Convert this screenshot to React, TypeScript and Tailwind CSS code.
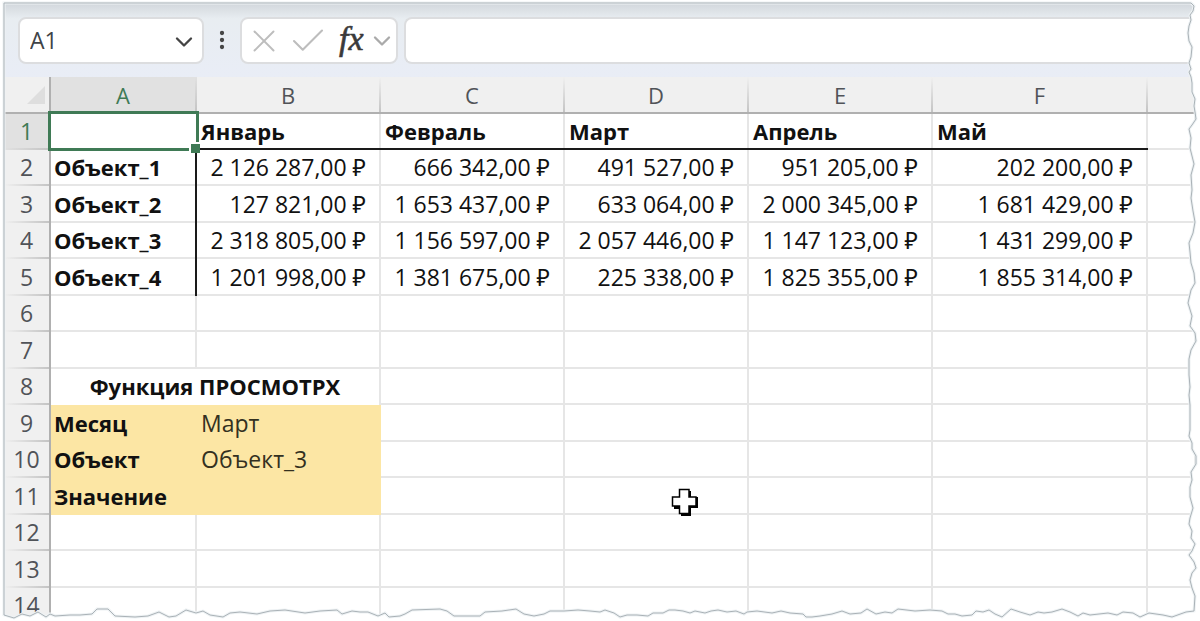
import { Check, ChevronDown, EllipsisVertical, X } from "lucide-react";
import clsx from "clsx";

const columns = ["A", "B", "C", "D", "E", "F", ""];

const months = ["Январь", "Февраль", "Март", "Апрель", "Май"];

const objects = [
  { name: "Объект_1", values: ["2 126 287,00 ₽", "666 342,00 ₽", "491 527,00 ₽", "951 205,00 ₽", "202 200,00 ₽"] },
  { name: "Объект_2", values: ["127 821,00 ₽", "1 653 437,00 ₽", "633 064,00 ₽", "2 000 345,00 ₽", "1 681 429,00 ₽"] },
  { name: "Объект_3", values: ["2 318 805,00 ₽", "1 156 597,00 ₽", "2 057 446,00 ₽", "1 147 123,00 ₽", "1 431 299,00 ₽"] },
  { name: "Объект_4", values: ["1 201 998,00 ₽", "1 381 675,00 ₽", "225 338,00 ₽", "1 825 355,00 ₽", "1 855 314,00 ₽"] },
];

const lookup = [
  { label: "Месяц", value: "Март" },
  { label: "Объект", value: "Объект_3" },
  { label: "Значение", value: "" },
];

const grid = "border-r-2 border-b-2 border-[#e6e6e6]";

// Torn paper outline, clockwise from the top left corner
const tornEdge =
  "4,3 1191,3 1194,6 1193,11 1190,15 1191,20 1189,26 1188,33 1189,41 1192,47 1191,57 1189,63 1191,69 1189,72 1191,77 1192,83 1192,92 1195,99 1194,106 1195,112 1196,119 1192,125 1189,129 1191,138 1190,148 1192,156 1194,164 1191,175 1192,190 1191,198 1193,211 1195,222 1193,233 1189,243 1190,252 1191,263 1194,273 1195,283 1191,290 1188,303 1192,316 1190,326 1195,333 1196,341 1191,350 1189,359 1189,375 1190,387 1189,395 1190,405 1190,430 1189,436 1192,443 1192,449 1196,456 1196,464 1191,472 1192,480 1190,487 1190,497 1193,508 1190,518 1189,524 1192,531 1191,538 1195,544 1192,551 1189,555 1194,562 1196,568 1192,573 1190,580 1192,588 1195,596 1194,611 " +
  "1186,612 1172,617 1163,615 1149,613 1140,617 1133,613 1123,612 1117,615 1108,613 1090,615 1083,613 1078,616 1070,612 1062,609 1052,612 1044,613 1038,612 1030,615 1020,612 1011,609 1002,617 995,614 989,610 983,612 976,611 972,615 962,616 955,614 948,614 942,611 930,610 915,611 898,609 892,613 885,612 876,614 867,609 861,613 850,614 842,611 832,614 820,616 812,617 806,617 803,614 790,613 781,611 772,613 757,611 747,612 744,614 736,611 727,612 718,610 711,611 705,613 695,611 690,613 683,611 675,610 669,610 663,613 653,613 648,616 637,615 627,615 620,617 614,613 605,610 600,612 590,611 578,610 564,611 550,611 544,614 534,616 524,614 516,609 502,611 485,612 480,616 465,616 454,616 447,611 440,609 412,610 405,614 400,616 " +
  "389,617 385,613 378,616 368,612 360,612 352,611 342,614 337,610 320,611 305,613 285,610 270,611 257,614 240,612 230,613 223,617 210,615 203,611 196,613 186,610 176,616 169,617 159,612 148,616 135,617 115,616 108,609 97,609 92,614 80,615 70,615 55,616 50,614 46,617 38,612 30,616 22,614 14,618 4,615";

function FormulaBar() {
  return (
    <header className="flex h-[73px] shrink-0 items-start bg-linear-to-b from-[#d3d8dd] via-[#e8edf1] via-20% to-[#e9edf6] pt-[13px] pl-[14px]">
      <div className="flex h-[47px] w-[186px] items-center rounded-lg border-2 border-[#dcdddf] bg-white pr-1">
        <input
          aria-label="Имя ячейки"
          defaultValue="A1"
          className="min-w-0 flex-1 pl-[10px] text-[23px] text-[#404347] outline-none"
        />
        <button aria-label="Список имён">
          <ChevronDown className="mt-[2px] size-7 text-[#444]" strokeWidth={2} />
        </button>
      </div>
      <EllipsisVertical className="mx-[6px] mt-[11px] size-6 text-[#444]" strokeWidth={2.300} />
      <div className="flex h-[47px] w-[158px] items-center rounded-lg border-2 border-[#dcdddf] bg-white pl-[3px]">
        <button aria-label="Отмена">
          <X className="size-[38px] text-[#bdbdbd]" strokeWidth={1.200} />
        </button>
        <button aria-label="Ввод" className="ml-1">
          <Check className="size-[42px] text-[#bdbdbd]" strokeWidth={1.200} />
        </button>
        <button
          aria-label="Вставить функцию"
          className="ml-[10px] pb-1 font-['Liberation_Serif',serif] text-[34px] leading-9 text-[#3a3a3a] italic [-webkit-text-stroke:0.6px_#3a3a3a]"
        >
          fx
        </button>
        <button aria-label="Недавние функции" className="ml-1">
          <ChevronDown className="size-7 text-[#aaa]" strokeWidth={2} />
        </button>
      </div>
      <input
        aria-label="Строка формул"
        className="ml-[6px] h-[47px] min-w-0 flex-1 rounded-l-lg border-2 border-r-0 border-[#dcdddf] bg-white px-3 text-[23px] outline-none"
      />
    </header>
  );
}

function RowHeader({ row }: { row: number }) {
  return (
    <th
      scope="row"
      className={clsx(
        "border-r-2 border-[#b0b0b0] bg-[linear-gradient(to_right,transparent,#c4c4c4)] bg-[length:100%_2px] bg-bottom bg-no-repeat pb-[2px] text-center text-[23px] font-normal",
        row === 1 ? "bg-[#e1e1e1] text-[#3f7a55]" : "bg-[#f0f0f0] text-[#505358]",
      )}
    >
      {row}
    </th>
  );
}

function EmptyCells({ count }: { count: number }) {
  return Array.from({ length: count }, (_, i) => <td key={i} className={grid} />);
}

function Sheet() {
  return (
    <table className="w-full table-fixed border-separate border-spacing-0 text-[22px] leading-7 text-[#111]">
      <colgroup>
        <col className="w-[47px]" />
        <col className="w-[146px]" />
        <col className="w-[184px]" />
        <col className="w-[184px]" />
        <col className="w-[184px]" />
        <col className="w-[184px]" />
        <col className="w-[215px]" />
        <col />
      </colgroup>
      <thead>
        <tr className="h-[37px]">
          <td className="border-r-2 border-b-2 border-[#b0b0b0] bg-[#f0f0f0]">
            <svg viewBox="0 0 22 22" className="ml-auto size-[22px] pr-1" aria-hidden="true">
              <path d="M22 0V22H0Z" fill="#dedede" />
            </svg>
          </td>
          {columns.map((name) => (
            <th
              key={name}
              scope="col"
              className={clsx(
                "border-b-2 border-[#b0b0b0] bg-[linear-gradient(to_bottom,transparent,#c4c4c4)] bg-[length:2px_100%] bg-right bg-no-repeat pr-[2px] font-normal",
                name === "A" ? "bg-[#e1e1e1] text-[#3f7a55]" : "bg-[#f0f0f0] text-[#505358]",
              )}
            >
              {name}
            </th>
          ))}
        </tr>
      </thead>
      <tbody className="[&>tr]:h-[36px] [&>tr:nth-child(2n+3)]:h-[37px]">
        <tr>
          <RowHeader row={1} />
          <td className="relative">
            <span className="absolute -top-[3px] right-[-2px] -bottom-px -left-[3px] border-3 border-[#3f7a55]" />
            <span className="absolute -right-[3px] -bottom-[3px] size-[11px] border-t-2 border-l-2 border-white bg-[#3f7a55]" />
          </td>
          {months.map((month) => (
            <th
              key={month}
              scope="col"
              className="border-b-2 border-b-[#1a1a1a] bg-[linear-gradient(#e6e6e6,#e6e6e6)] bg-[length:2px_100%] bg-right bg-no-repeat pl-1 text-left font-bold"
            >
              {month}
            </th>
          ))}
          <EmptyCells count={1} />
        </tr>
        {objects.map((object, i) => (
          <tr key={object.name}>
            <RowHeader row={i + 2} />
            <th
              scope="row"
              className="border-r-2 border-[#1a1a1a] bg-[linear-gradient(#e6e6e6,#e6e6e6)] bg-[length:100%_2px] bg-bottom bg-no-repeat pb-[2px] pl-[3px] text-left font-bold"
            >
              {object.name}
            </th>
            {object.values.map((value) => (
              <td key={value} className={clsx(grid, "pr-[13px] text-right text-[23px] whitespace-nowrap")}>
                {value}
              </td>
            ))}
            <EmptyCells count={1} />
          </tr>
        ))}
        <tr>
          <RowHeader row={6} />
          <EmptyCells count={7} />
        </tr>
        <tr>
          <RowHeader row={7} />
          <EmptyCells count={7} />
        </tr>
        <tr>
          <RowHeader row={8} />
          <th colSpan={2} className="border-r-2 border-[#e6e6e6] pb-[2px] text-center font-bold">
            Функция ПРОСМОТРХ
          </th>
          <EmptyCells count={5} />
        </tr>
        {lookup.map((item, i) => (
          <tr key={item.label}>
            <RowHeader row={i + 9} />
            <th scope="row" className="bg-[#fce6a4] pb-[2px] pl-[3px] text-left font-bold">
              {item.label}
            </th>
            <td className="bg-[#fce6a4] pb-[2px] pl-1 text-[23px] text-[#33301f]">{item.value}</td>
            <EmptyCells count={5} />
          </tr>
        ))}
        {[12, 13, 14].map((row) => (
          <tr key={row}>
            <RowHeader row={row} />
            <EmptyCells count={7} />
          </tr>
        ))}
      </tbody>
    </table>
  );
}

export default function App() {
  return (
    <main className="relative flex h-screen flex-col overflow-hidden bg-white pt-1 pr-1 pl-1 font-['Open_Sans','Noto_Sans',sans-serif]">
      <FormulaBar />
      <Sheet />

      <svg
        viewBox="0 0 28 28"
        className="absolute top-[488px] left-[671px] size-7"
        aria-hidden="true"
      >
        <path d="M10 3H20V9H27V20H20V28H10V21H3V10H10Z" fill="#000" />
        <path d="M8.500 1.500H18V9H25V18H18V25.500H8.500V18H1.500V9H8.500Z" fill="#fff" stroke="#000" strokeWidth="1.500" />
      </svg>

      <svg
        viewBox="0 0 1200 621"
        preserveAspectRatio="none"
        className="pointer-events-none absolute inset-0 size-full"
        aria-hidden="true"
      >
        <path d={`M0 0H1200V621H0Z M${tornEdge}Z`} fill="#fff" fillRule="evenodd" />
        <polygon points={tornEdge} fill="none" stroke="#eef2f4" strokeWidth="3" />
        <polygon points={tornEdge} fill="none" stroke="#aab2b7" strokeWidth="1" />
      </svg>
    </main>
  );
}
